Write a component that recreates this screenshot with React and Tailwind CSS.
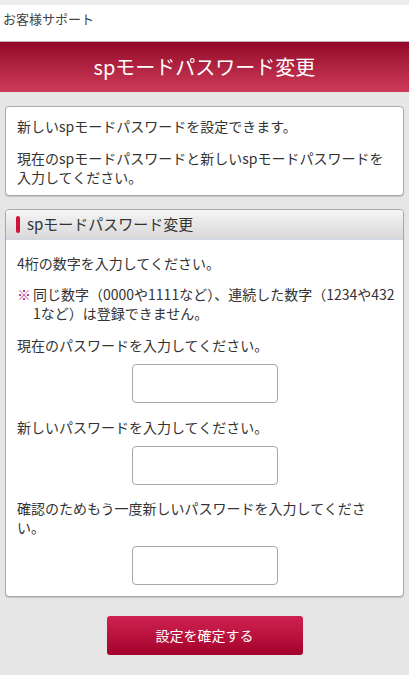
import React from 'react';

const font = { fontFamily: '"Noto Sans CJK JP", "Noto Sans", sans-serif' };

const PasswordInput = () => (
  <div className="mt-[9px] flex justify-center">
    <input
      type="password"
      className="w-[146px] h-[39px] rounded-[4px] border border-[#a8a8a8] bg-white outline-none"
    />
  </div>
);

const App = () => {
  return (
    <div className="min-h-[675px] bg-[#e6e6e6] text-[#333] text-[14px]" style={font}>
      <div className="h-[5px] bg-[#ececec]" />
      <div className="h-[37px] bg-white border-b border-[#b8b8b8] px-[3px] pt-[6px] text-[13px] leading-[16px] text-[#444]">
        お客様サポート
      </div>
      <div className="h-[50px] flex items-center justify-center bg-gradient-to-b from-[#920628] to-[#cf3a5a] text-white text-[20px] leading-[24px]">
        spモードパスワード変更
      </div>

      <div className="mx-[5px] mt-[14px] rounded-[4px] border border-[#a9a9a9] bg-white px-[11px] pt-[10px] pb-[8px] leading-[19px] shadow-[0_1px_1px_rgba(0,0,0,0.15)]">
        <p>新しいspモードパスワードを設定できます。</p>
        <p className="mt-[13px]">
          現在のspモードパスワードと新しいspモードパスワードを
          <br />
          入力してください。
        </p>
      </div>

      <div className="mx-[5px] mt-[13px] rounded-[4px] border border-[#a9a9a9] bg-white overflow-hidden shadow-[0_1px_1px_rgba(0,0,0,0.15)]">
        <div className="h-[30px] flex items-center gap-[7px] px-[10px] bg-gradient-to-b from-[#f5f5f5] to-[#dadada] border-b-2 border-[#d3d7e2]">
          <span className="w-[4px] h-[17px] rounded-[2px] bg-[#d01438]" />
          <span className="text-[15px] leading-[20px] text-[#333]">spモードパスワード変更</span>
        </div>
        <div className="px-[11px] pt-[14px] pb-[11px] leading-[19px]">
          <p>4桁の数字を入力してください。</p>
          <div className="mt-[12px] flex leading-[19px] whitespace-nowrap">
            <span className="w-[16px] shrink-0 text-[#b5177a]">※</span>
            <span>
              同じ数字（0000や1111など）、連続した数字（1234や432
              <br />
              1など）は登録できません。
            </span>
          </div>
          <p className="mt-[13px]">現在のパスワードを入力してください。</p>
          <PasswordInput />
          <p className="mt-[15px]">新しいパスワードを入力してください。</p>
          <PasswordInput />
          <p className="mt-[14px]">
            確認のためもう一度新しいパスワードを入力してくださ
            <br />
            い。
          </p>
          <PasswordInput />
        </div>
      </div>

      <div className="flex justify-center pt-[19px] pb-[21px]">
        <button className="w-[196px] h-[39px] rounded-[3px] bg-gradient-to-b from-[#d02150] to-[#a3002c] text-white text-[14px]">
          設定を確定する
        </button>
      </div>
    </div>
  );
};

export default App;
